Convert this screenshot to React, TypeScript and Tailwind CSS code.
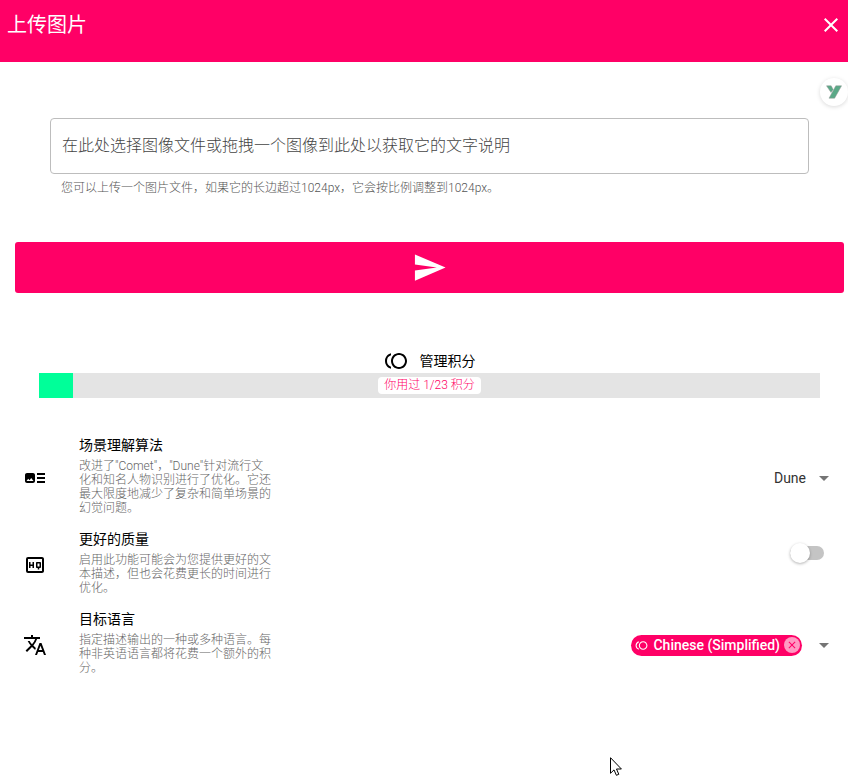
import { useState } from 'react';
import type { ReactNode } from 'react';
import {
  MdArrowDropDown,
  MdArtTrack,
  MdClose,
  MdOutlineHighQuality,
  MdSend,
  MdToll,
  MdTranslate,
} from 'react-icons/md';

interface SettingRowProps {
  icon: ReactNode;
  title: string;
  lines: string[];
  htmlFor: string;
  children: ReactNode;
}

function SettingRow({ icon, title, lines, htmlFor, children }: SettingRowProps) {
  return (
    <div className="flex items-center px-2">
      <span className="mr-8 text-black">{icon}</span>
      <div className="flex-1 pt-1 pb-[10px]">
        <label htmlFor={htmlFor} className="block text-sm leading-5 font-normal text-black">
          {title}
        </label>
        <p className="mt-1 text-xs leading-[14px] text-[#666]">
          {lines.map((line) => (
            <span key={line} className="block">
              {line}
            </span>
          ))}
        </p>
      </div>
      {children}
    </div>
  );
}

export default function App() {
  const [fileName, setFileName] = useState('');
  const [algorithm, setAlgorithm] = useState('Dune');
  const [betterQuality, setBetterQuality] = useState(false);
  const [languages, setLanguages] = useState(['Chinese (Simplified)']);

  const used = 1;
  const total = 23;

  return (
    <div className="relative min-h-screen overflow-hidden bg-white font-[Roboto,'Noto_Sans_CJK_SC',sans-serif] font-light">
      <header className="flex h-[62px] items-start justify-between bg-[#ff0066] pt-[10px] pr-[5px] pl-[7px] text-white">
        <h1 className="text-xl leading-[30px] font-normal">上传图片</h1>
        <button type="button" aria-label="关闭" className="mt-[3px]">
          <MdClose size={24} />
        </button>
      </header>

      {/* Floating extension badge */}
      <div className="absolute top-[78px] right-0 flex h-7 w-7 items-center justify-center rounded-full bg-white shadow-[0_1px_4px_rgba(0,0,0,0.15)]">
        <svg width="16" height="14" viewBox="0 0 16 14" aria-hidden="true">
          <path d="M0.5 0.8H5.2L7.2 4.6L5 7.4Z" fill="#5aa987" stroke="#999" strokeWidth="0.5" />
          <path d="M9.8 0.8H15.6L8.6 13.2H3Z" fill="#5aa987" stroke="#999" strokeWidth="0.5" />
        </svg>
      </div>

      <main className="pt-14 pr-1 pl-[15px]">
        <form onSubmit={(e) => e.preventDefault()}>
          {/* File picker */}
          <div className="px-[35px]">
            <label
              htmlFor="image"
              className="flex h-14 cursor-pointer items-center rounded border border-[#bdbdbd] px-[11px] text-base text-[#444]"
            >
              {fileName || '在此处选择图像文件或拖拽一个图像到此处以获取它的文字说明'}
            </label>
            <input
              id="image"
              type="file"
              accept="image/*"
              className="sr-only"
              onChange={(e) => setFileName(e.target.files?.[0]?.name ?? '')}
            />
            <p className="mt-1 px-[11px] text-xs leading-5 text-[#555]">
              您可以上传一个图片文件，如果它的长边超过1024px，它会按比例调整到1024px。
            </p>
          </div>

          <button
            type="submit"
            aria-label="发送"
            className="mt-11 flex h-[51px] w-full items-center justify-center rounded-[3px] bg-[#ff0066] text-white"
          >
            <MdSend size={35} />
          </button>
        </form>

        {/* Credits */}
        <section className="mt-14 px-6">
          <a
            href="#credits"
            className="flex h-6 items-center justify-center gap-3 text-sm font-normal text-black"
          >
            <MdToll size={24} />
            管理积分
          </a>
          <div className="grid h-[25px] items-center bg-[#e4e4e4]">
            <div
              className="col-start-1 row-start-1 h-full bg-[#00ff99]"
              style={{ width: `${(used / total) * 100}%` }}
            />
            <span className="col-start-1 row-start-1 justify-self-center rounded bg-white px-[6px] text-xs leading-[17px] text-[#ff0066]">
              你用过 {used}/{total} 积分
            </span>
          </div>
        </section>

        {/* Settings */}
        <section className="mt-[33px]">
          <SettingRow
            icon={<MdArtTrack size={24} />}
            title="场景理解算法"
            htmlFor="algorithm"
            lines={[
              '改进了"Comet"，"Dune"针对流行文',
              '化和知名人物识别进行了优化。它还',
              '最大限度地减少了复杂和简单场景的',
              '幻觉问题。',
            ]}
          >
            <div className="grid items-center">
              <select
                id="algorithm"
                value={algorithm}
                onChange={(e) => setAlgorithm(e.target.value)}
                className="field-sizing-content col-start-1 row-start-1 appearance-none bg-transparent pr-[30px] text-sm font-normal text-[#333]"
              >
                <option>Dune</option>
                <option>Comet</option>
              </select>
              <MdArrowDropDown
                size={24}
                className="pointer-events-none col-start-1 row-start-1 justify-self-end text-[#757575]"
              />
            </div>
          </SettingRow>

          <SettingRow
            icon={<MdOutlineHighQuality size={24} />}
            title="更好的质量"
            htmlFor="quality"
            lines={['启用此功能可能会为您提供更好的文', '本描述，但也会花费更长的时间进行', '优化。']}
          >
            <div className="mt-[18px] mr-3 grid w-[34px] items-center self-start">
              <span className="col-start-1 row-start-1 h-[14px] rounded-full bg-[#c4c4c4]" />
              <input
                id="quality"
                type="checkbox"
                role="switch"
                checked={betterQuality}
                onChange={(e) => setBetterQuality(e.target.checked)}
                className="z-10 col-start-1 row-start-1 h-5 w-5 cursor-pointer appearance-none rounded-full bg-white shadow-[0_1px_3px_rgba(0,0,0,0.3)] checked:justify-self-end checked:bg-[#ff0066]"
              />
            </div>
          </SettingRow>

          <SettingRow
            icon={<MdTranslate size={24} />}
            title="目标语言"
            htmlFor="languages"
            lines={['指定描述输出的一种或多种语言。每', '种非英语语言都将花费一个额外的积', '分。']}
          >
            <div className="flex items-center gap-[10px]">
              {languages.map((language) => (
                <span
                  key={language}
                  className="flex h-[21px] items-center rounded-full bg-[#ff0066] pr-[2px] pl-1 text-sm font-medium text-white"
                >
                  <MdToll size={13} className="mr-[5px]" />
                  {language}
                  <button
                    type="button"
                    aria-label={`移除 ${language}`}
                    onClick={() => setLanguages(languages.filter((l) => l !== language))}
                    className="ml-1 flex h-4 w-4 items-center justify-center rounded-full bg-[#ff99c2] text-[#ff0066]"
                  >
                    <MdClose size={12} />
                  </button>
                </span>
              ))}
              <button id="languages" type="button" aria-label="选择目标语言" className="text-[#757575]">
                <MdArrowDropDown size={24} />
              </button>
            </div>
          </SettingRow>
        </section>
      </main>

      {/* Mouse pointer */}
      <svg
        className="pointer-events-none absolute top-[757px] left-[610px]"
        width="12"
        height="19"
        viewBox="0 0 12 19"
        aria-hidden="true"
      >
        <path
          d="M0.5 0.7V16.3L4 12.9L6.4 18.3L8.8 17.3L6.5 12H11.4Z"
          fill="#fff"
          stroke="#000"
          strokeWidth="1"
        />
      </svg>
    </div>
  );
}
